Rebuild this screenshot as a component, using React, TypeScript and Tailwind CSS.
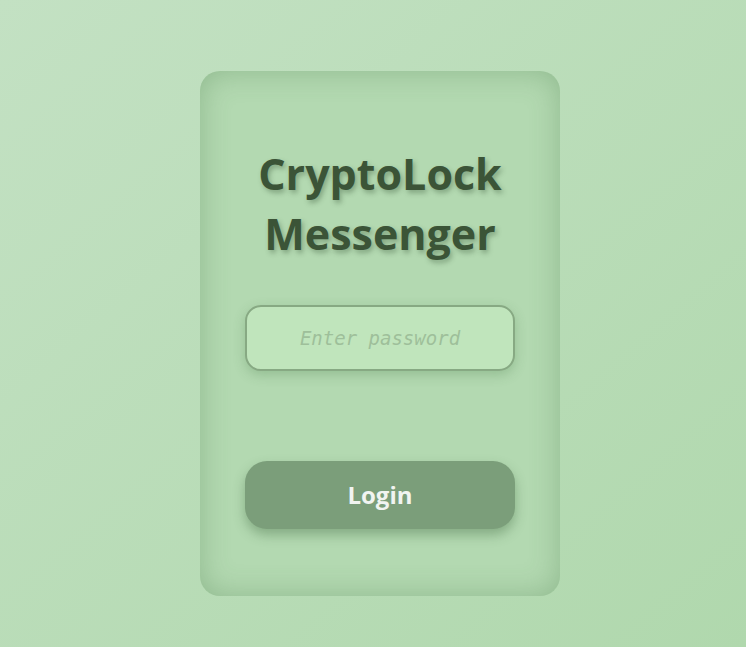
import React from "react";

export default function App() {
  return (
    <main className="min-h-screen w-full bg-gradient-to-br from-[#c3e1c3] to-[#b0d8ad] pl-[200px] pt-[71px] pb-[51px] font-['Open_Sans',sans-serif]">
      <section className="flex h-[525px] w-[360px] flex-col items-center rounded-[20px] bg-[#b3d9b1] px-[45px] pt-[73px] shadow-[inset_0_0_30px_rgba(60,110,60,0.3)]">
        <h1 className="text-center text-[43px] font-bold leading-[60px] text-[#3b5437] [text-shadow:2px_3px_5px_rgba(40,70,40,0.35)]">
          CryptoLock
          <br />
          Messenger
        </h1>
        <input
          type="password"
          placeholder="Enter password"
          className="mt-[41px] h-[66px] w-[270px] rounded-[16px] border-2 border-[#87a983] bg-[#c0e5bc] px-4 text-center font-['DejaVu_Sans_Mono',monospace] text-[19px] italic text-[#3b5437] shadow-[0_4px_12px_rgba(60,110,60,0.25)] outline-none placeholder:text-[#9ebf9a]"
        />
        <button className="mt-[90px] h-[68px] w-[270px] rounded-[22px] bg-[#7b9e7a] text-[24px] font-bold text-[#f1f4f1] shadow-[0_6px_12px_rgba(50,90,50,0.35)]">
          Login
        </button>
      </section>
    </main>
  );
}
